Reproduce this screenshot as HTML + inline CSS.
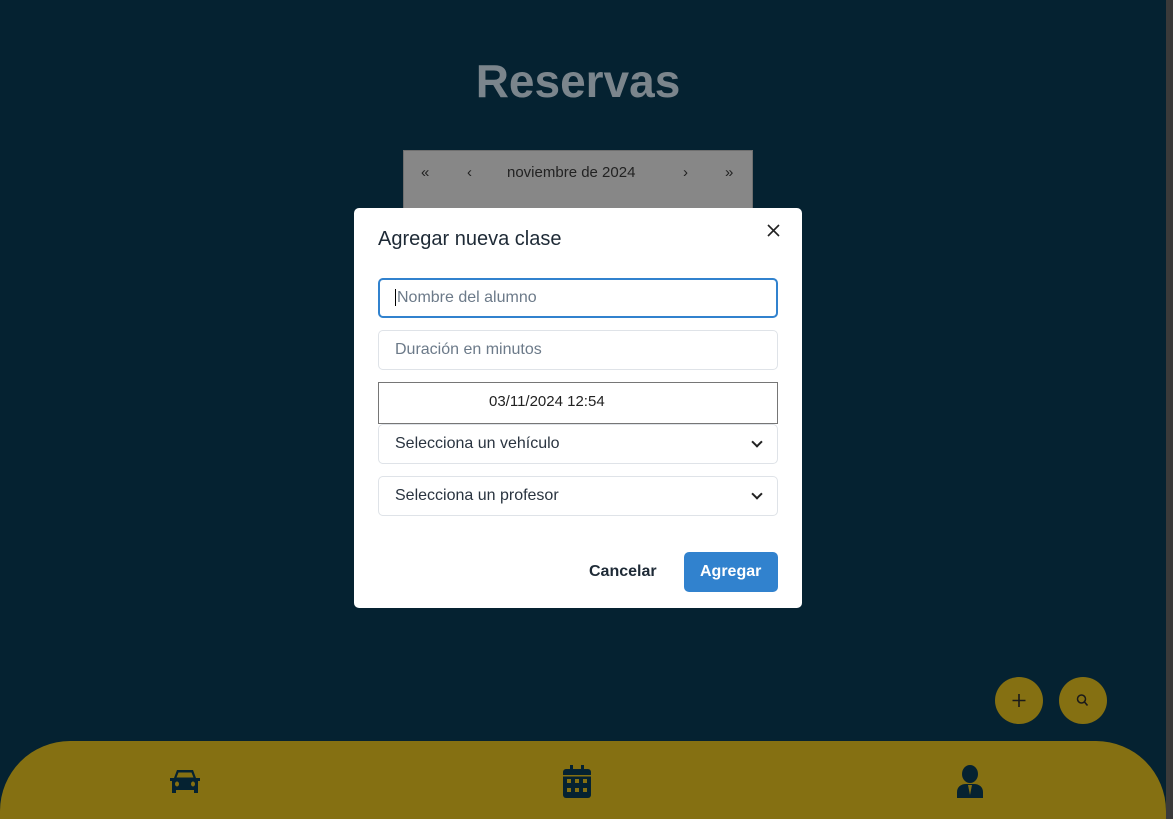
<!DOCTYPE html>
<html><head><style>
*{box-sizing:border-box;margin:0;padding:0}
html,body{width:1173px;height:819px;overflow:hidden}
body{background:#052231;font-family:"Liberation Sans",sans-serif;position:relative}
h1{position:absolute;top:54px;left:0;width:1156px;text-align:center;color:#7b858c;font-size:46px;font-weight:bold}
.cal{position:absolute;left:403px;top:150px;width:350px;height:70px;background:#878787;border:1px solid #6f6f6f}
.cal span{position:absolute;top:13px;font-size:15px;color:#222}
.modal{position:absolute;left:354px;top:208px;width:448px;height:400px;background:#fff;border-radius:5px}
.title{position:absolute;left:24px;top:20px;font-size:20px;color:#1e2a36}
.x{position:absolute;right:22px;top:16px}
.in{position:absolute;left:24px;width:400px;height:40px;border:1px solid #dfe3e8;border-radius:5px;font-size:16px;color:#6c7a89;padding:10px 16px}
.sel{color:#2a3440}
.sel:after{content:"";position:absolute;right:16px;top:13px;width:6px;height:6px;border-right:2px solid #222;border-bottom:2px solid #222;transform:rotate(45deg)}
.btn{position:absolute;top:344px;height:40px;font-size:16px;font-weight:bold;border-radius:5px;padding:11px 16px}
.fab{position:absolute;top:677px;width:48px;height:47px;border-radius:50%;background:#857012;color:#1a1a1a;text-align:center}
.bar{position:absolute;left:0;top:741px;width:1166px;height:78px;background:#857012;border-radius:70px 70px 0 0}
.sb{position:absolute;right:0;top:0;width:7px;height:819px;background:#3a3a3a}
</style></head><body>
<h1>Reservas</h1>
<div class="cal"><span style="left:17px">«</span><span style="left:63px">‹</span><span style="left:103px">noviembre de 2024</span><span style="left:279px">›</span><span style="left:321px">»</span></div>
<div class="modal">
<div class="title">Agregar nueva clase</div>
<svg class="x" width="13" height="13" viewBox="0 0 13 13"><path d="M1 1l11 11M12 1L1 12" stroke="#222" stroke-width="1.6"/></svg>
<div class="in" style="top:70px;border:2px solid #3182ce;padding:9px 15px"><span style="border-left:1px solid #000;margin-right:1px"></span>Nombre del alumno</div>
<div class="in" style="top:122px">Duración en minutos</div>
<div class="in" style="top:174px;height:42px;border:1px solid #767676;border-radius:0;color:#222;padding-left:110px;font-size:15px">03/11/2024 12:54</div>
<div class="in sel" style="top:216px">Selecciona un vehículo</div>
<div class="in sel" style="top:268px">Selecciona un profesor</div>
<div class="btn" style="left:219px;color:#1e2a36">Cancelar</div>
<div class="btn" style="left:330px;width:94px;background:#3182ce;color:#fff">Agregar</div>
</div>
<div class="fab" style="left:995px"><svg width="48" height="47" viewBox="0 0 48 47"><path d="M24 17v13M17.5 23.5h13" stroke="#1a1a1a" stroke-width="1.6"/></svg></div>
<div class="fab" style="left:1059px"><svg width="48" height="47" viewBox="0 0 48 47"><circle cx="22.5" cy="22" r="4" fill="none" stroke="#1a1a1a" stroke-width="1.5"/><path d="M25.5 25l3 3.5" stroke="#1a1a1a" stroke-width="1.6"/></svg></div>
<div class="bar"></div>
<svg style="position:absolute;left:168px;top:768px" width="34" height="28" viewBox="0 0 34 28"><path d="M9 2h16l3 8h4v3h-2v12h-4v-3H8v3H4V13H2v-3h4z M10.5 4.5l-2 5h17l-2-5z" fill="#052231" fill-rule="evenodd"/><ellipse cx="9" cy="16" rx="2" ry="2.5" fill="#857012"/><ellipse cx="25" cy="16" rx="2" ry="2.5" fill="#857012"/></svg>
<svg style="position:absolute;left:562px;top:765px" width="30" height="34" viewBox="0 0 30 34"><rect x="8" y="0" width="3" height="6" fill="#052231"/><rect x="19" y="0" width="3" height="6" fill="#052231"/><rect x="1" y="4" width="28" height="29" rx="3" fill="#052231"/><g fill="#857012"><rect x="5" y="14" width="4" height="4"/><rect x="13" y="14" width="4" height="4"/><rect x="21" y="14" width="4" height="4"/><rect x="5" y="23" width="4" height="4"/><rect x="13" y="23" width="4" height="4"/><rect x="21" y="23" width="4" height="4"/></g><rect x="1" y="10" width="28" height="1.5" fill="#857012"/></svg>
<svg style="position:absolute;left:955px;top:765px" width="30" height="34" viewBox="0 0 30 34"><ellipse cx="15" cy="9" rx="8" ry="9" fill="#052231"/><path d="M2 33v-6c0-5 4-8 9-8h8c5 0 9 3 9 8v6z" fill="#052231"/><path d="M13 20l2 10 2-10z" fill="#857012"/></svg>
<div class="sb"></div>
</body></html>
